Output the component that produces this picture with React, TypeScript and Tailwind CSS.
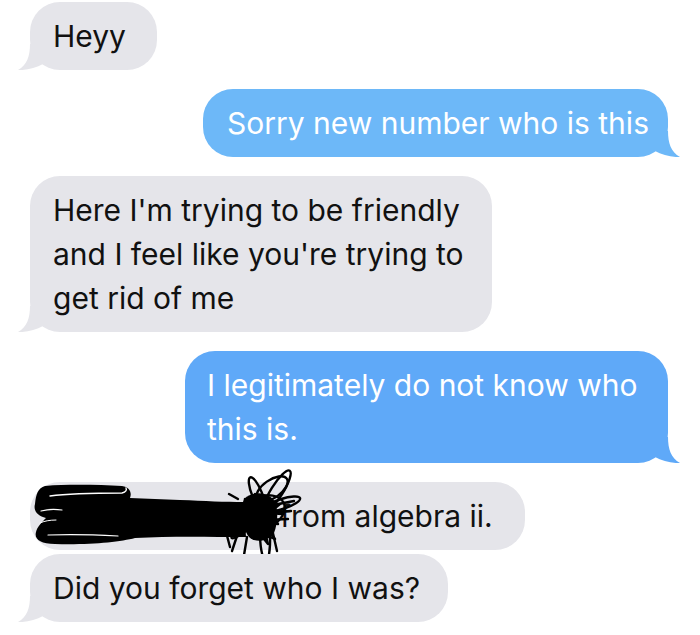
const LeftTail = ({ fill }: { fill: string }) => (
  <svg
    className="absolute left-[-12px] bottom-0"
    width="30"
    height="26"
    viewBox="0 0 30 26"
  >
    <path d="M25 0 L12 0 C12 12 9 21 0 26 C8 26.5 18 24 25 20 Z" className={fill} />
  </svg>
);

const RightTail = ({ fill }: { fill: string }) => (
  <svg
    className="absolute right-[-12px] bottom-0"
    width="30"
    height="26"
    viewBox="0 0 30 26"
  >
    <path d="M5 0 L18 0 C18 12 21 21 30 26 C22 26.5 12 24 5 20 Z" className={fill} />
  </svg>
);

// the black marker scribble over the sender's name
const Scribble = () => (
  <svg
    className="absolute left-0 top-[-13px] overflow-visible"
    width="275"
    height="95"
    viewBox="30 470 275 95"
  >
    <path
      d="M45 487 C70 485 100 486 122 487 C130 488 132 494 130 499 L180 501 C205 502 225 503 244 503 L246 538 C210 538 170 537 135 539 C120 543 90 546 55 545 C40 545 34 540 36 533 C37 528 42 523 46 519 C38 517 33 512 35 505 C36 495 38 489 45 487 Z"
      fill="black"
    />
    <g fill="none" stroke="white" strokeLinecap="round">
      <path d="M50 497 C72 494 100 494 122 494 C126 493 127 491 126 489" strokeWidth="1.4" />
      <path d="M41 512 C48 510 56 510 62 511" strokeWidth="1.2" />
      <path d="M48 536 C70 535 100 536 118 537" strokeWidth="1.2" />
      <path d="M40 524 C44 522 50 521 56 521" strokeWidth="1" />
    </g>
    <path
      d="M244 500 C252 492 266 493 273 500 C279 508 278 524 274 534 C268 543 255 544 249 538 C242 530 240 508 244 500 Z"
      fill="black"
    />
    <g fill="none" stroke="black" strokeWidth="2.4" strokeLinecap="round" strokeLinejoin="round">
      <ellipse cx="277" cy="492" rx="24" ry="6" transform="rotate(-58 277 492)" />
      <ellipse cx="272" cy="490" rx="18" ry="9" transform="rotate(-35 272 490)" />
      <ellipse cx="282" cy="505" rx="19" ry="5" transform="rotate(-18 282 505)" />
      <ellipse cx="265" cy="537" rx="25" ry="5" transform="rotate(88 265 537)" />
      <ellipse cx="257" cy="495" rx="18" ry="5" transform="rotate(68 257 495)" />
      <ellipse cx="247" cy="526" rx="20" ry="4" transform="rotate(140 247 526)" />
      <ellipse cx="262" cy="514" rx="24" ry="16" transform="rotate(-25 262 514)" />
      <path d="M245 500 L275 540 L250 530 L280 505 L248 520 L278 525 L255 495 L268 545 L242 512 L282 515" />
      <path d="M268 507 L294 502" />
      <path d="M268 514 L291 512" />
      <path d="M266 521 L288 520" />
      <path d="M240 528 L232 552" />
      <path d="M226 533 L230 548" />
      <path d="M247 538 L244 556" />
      <path d="M272 530 L277 552" />
      <path d="M238 500 L229 495" />
    </g>
  </svg>
);

const App = () => {
  return (
    <div className="w-[700px] h-[635px] bg-white overflow-hidden font-[Inter,sans-serif] text-[30px] leading-[44px] text-[#111] pt-[2px] pl-[30px] pr-[32px] flex flex-col items-start gap-[19px]">
      <div className="relative w-[127px] rounded-[30px] bg-[#e5e5ea] px-[23px] py-[12px]">
        <span className="relative z-10">Heyy</span>
        <LeftTail fill="fill-[#e5e5ea]" />
      </div>

      <div className="relative self-end w-[465px] rounded-[30px] bg-[#6db8f8] text-white px-[24px] py-[12px] whitespace-nowrap">
        <span className="relative z-10">Sorry new number who is this</span>
        <RightTail fill="fill-[#6db8f8]" />
      </div>

      <div className="relative w-[462px] rounded-[30px] bg-[#e5e5ea] px-[23px] py-[12px] whitespace-nowrap">
        <div className="relative z-10 flex flex-col">
          <span>Here I'm trying to be friendly</span>
          <span>and I feel like you're trying to</span>
          <span>get rid of me</span>
        </div>
        <LeftTail fill="fill-[#e5e5ea]" />
      </div>

      <div className="relative self-end w-[483px] rounded-[30px] bg-[#5fa9f8] text-white px-[22px] py-[12px] whitespace-nowrap">
        <div className="relative z-10 flex flex-col">
          <span>I legitimately do not know who</span>
          <span>this is.</span>
        </div>
        <RightTail fill="fill-[#5fa9f8]" />
      </div>

      <div className="flex flex-col items-start gap-[4px]">
        <div className="relative w-[495px] rounded-[30px] bg-[#e5e5ea] pl-[250px] pr-[20px] py-[12px] whitespace-nowrap">
          <span>from algebra ii.</span>
          <Scribble />
        </div>

        <div className="relative w-[418px] rounded-[30px] bg-[#e5e5ea] px-[23px] py-[12px] whitespace-nowrap">
          <span className="relative z-10">Did you forget who I was?</span>
          <LeftTail fill="fill-[#e5e5ea]" />
        </div>
      </div>
    </div>
  );
};

export default App;
